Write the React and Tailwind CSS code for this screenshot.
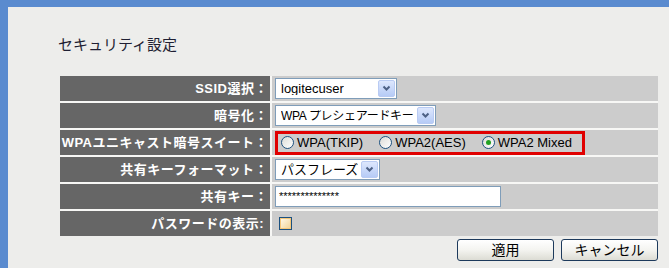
import React from "react";

const jp = "font-['Liberation_Sans','Noto_Sans_CJK_JP',sans-serif]";

const Arrow = () => (
  <span className="flex h-[17px] w-[17px] shrink-0 items-center justify-center rounded-[2px] border border-[#b9cbf3] bg-gradient-to-b from-[#dde7fd] to-[#b6cbf6]">
    <svg width="11" height="11" viewBox="0 0 11 11">
      <path d="M2.5 3.5 L5.5 6.5 L8.5 3.5" fill="none" stroke="#4d6185" strokeWidth="2" />
    </svg>
  </span>
);

const Select = ({ value, width, text = "text-[13px]" }) => (
  <div
    className={`flex h-[21px] items-center justify-between border border-[#7f9db9] bg-white pl-[5px] pr-[1px] text-black ${text} ${jp} ${width}`}
  >
    <span className="overflow-hidden whitespace-nowrap leading-none">{value}</span>
    <Arrow />
  </div>
);

const Radio = ({ label, checked }) => (
  <label className="flex items-center gap-[3px] whitespace-nowrap">
    <span className="flex h-[13px] w-[13px] items-center justify-center rounded-full border border-[#1c5180] bg-gradient-to-br from-[#dcdcd7] to-white">
      {checked && <span className="h-[5px] w-[5px] rounded-full bg-[#21a121]" />}
    </span>
    <span className="leading-none">{label}</span>
  </label>
);

const Label = ({ children, pr = "pr-[2px]" }) => (
  <div
    className={`flex h-[25px] items-center justify-end bg-[#666666] text-[13px] font-bold tracking-[0.5px] text-white ${pr} ${jp}`}
  >
    {children}
  </div>
);

const Cell = ({ children }) => (
  <div className="flex h-[25px] items-center bg-[#cccccc] pl-[3px]">{children}</div>
);

const Button = ({ children }) => (
  <button
    className={`flex h-[22px] w-[97px] items-center justify-center rounded-[3px] border border-[#1d3a5c] bg-gradient-to-b from-white via-[#f4f4f0] to-[#dcdcd4] text-[14px] text-black ${jp}`}
  >
    {children}
  </button>
);

export default function App() {
  return (
    <div className="h-[268px] w-[669px] overflow-hidden border-l-[8px] border-t-[7px] border-[#5a8bcf] bg-[#ededeb]">
      <div className="pl-[50px]">
        <h1 className={`pt-[28px] text-[15px] leading-[20px] text-[#1f1f33] ${jp}`}>
          セキュリティ設定
        </h1>

        <div className="ml-[2px] mt-[21px] grid w-[598px] grid-cols-[210px_386px] gap-[2px] bg-[#f7f7f5]">
          <Label>SSID選択：</Label>
          <Cell>
            <Select value="logitecuser" width="w-[122px]" />
          </Cell>

          <Label>暗号化：</Label>
          <Cell>
            <Select
              value="WPA プレシェアードキー"
              width="w-[161px]"
              text="text-[12px] tracking-[-0.3px]"
            />
          </Cell>

          <Label>WPAユニキャスト暗号スイート：</Label>
          <Cell>
            <div
              className={`flex h-[24px] w-[310px] items-center gap-[16px] border-[3px] border-[#e00000] pl-[3px] text-[13px] text-black ${jp}`}
            >
              <Radio label="WPA(TKIP)" />
              <Radio label="WPA2(AES)" />
              <Radio label="WPA2 Mixed" checked />
            </div>
          </Cell>

          <Label>共有キーフォーマット：</Label>
          <Cell>
            <Select value="パスフレーズ" width="w-[105px]" />
          </Cell>

          <Label>共有キー：</Label>
          <Cell>
            <div className="flex h-[21px] w-[226px] items-center border border-[#7f9db9] bg-white pl-[3px] font-['Liberation_Sans',sans-serif] text-[11px] text-black">
              **************
            </div>
          </Cell>

          <Label pr="pr-[6px]">パスワードの表示:</Label>
          <Cell>
            <span className="ml-[4px] flex h-[13px] w-[13px] items-center justify-center border border-[#1c5180] bg-white">
              <span className="h-[11px] w-[11px] border border-[#f5c77a] bg-gradient-to-br from-[#fff8e6] to-[#f2d59a]" />
            </span>
          </Cell>
        </div>

        <div className="ml-[2px] mt-[3px] flex w-[598px] justify-end gap-[7px]">
          <Button>適用</Button>
          <Button>キャンセル</Button>
        </div>
      </div>
    </div>
  );
}
